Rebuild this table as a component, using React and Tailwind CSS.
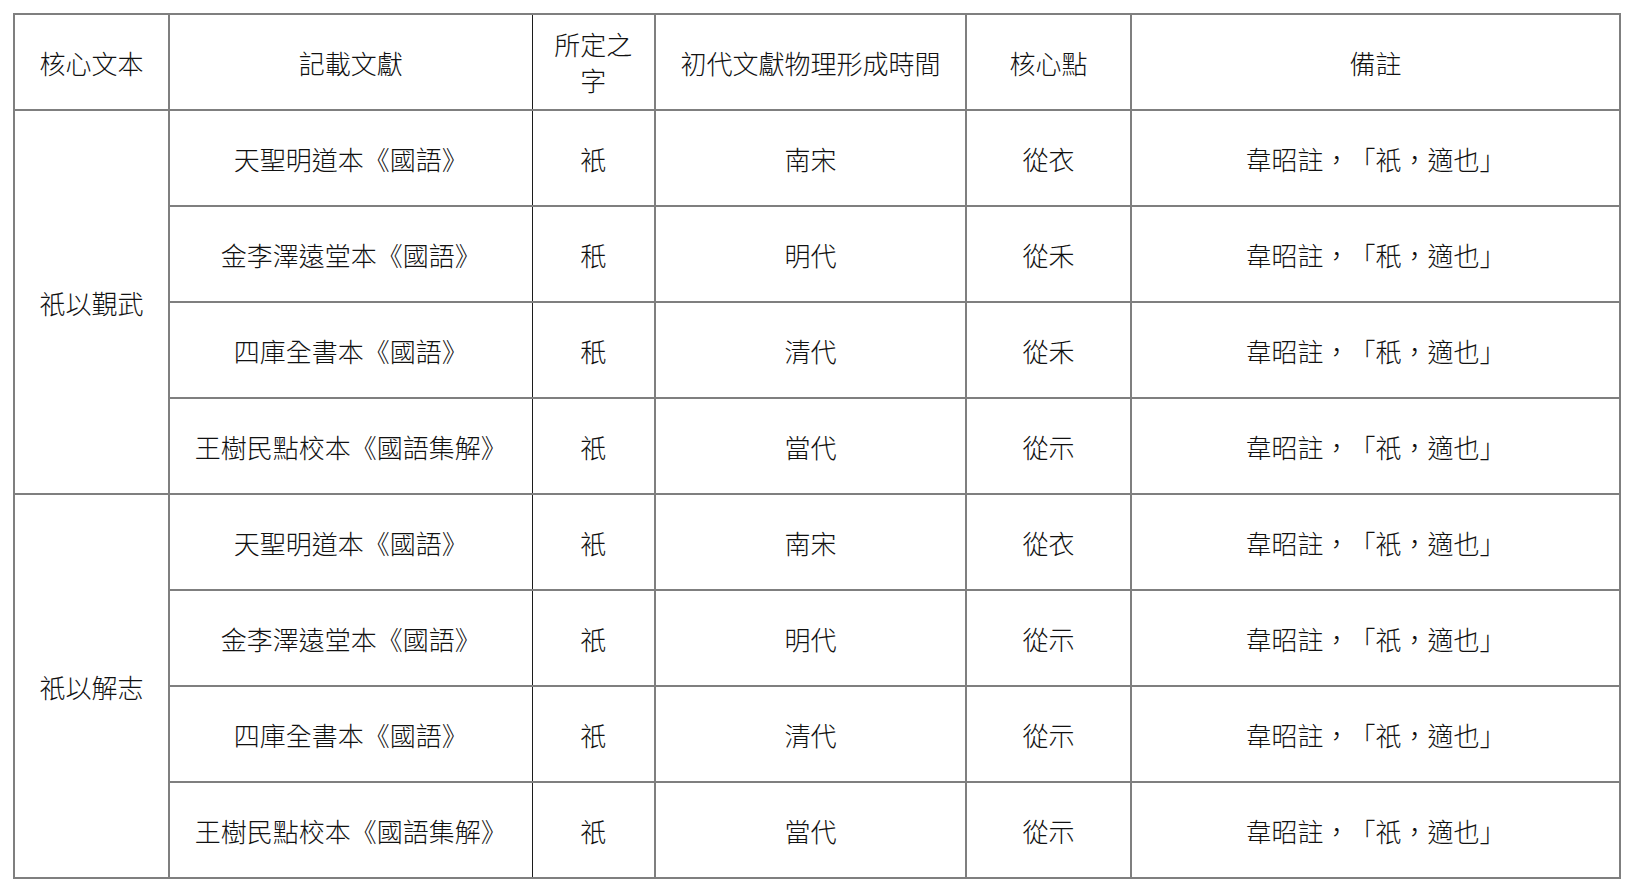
const groups = [
  {
    title: '祇以覲武',
    rows: [
      ['天聖明道本《國語》', '衹', '南宋', '從衣', '韋昭註，「衹，適也」'],
      ['金李澤遠堂本《國語》', '秖', '明代', '從禾', '韋昭註，「秖，適也」'],
      ['四庫全書本《國語》', '秖', '清代', '從禾', '韋昭註，「秖，適也」'],
      ['王樹民點校本《國語集解》', '祇', '當代', '從示', '韋昭註，「祇，適也」'],
    ],
  },
  {
    title: '祇以解志',
    rows: [
      ['天聖明道本《國語》', '衹', '南宋', '從衣', '韋昭註，「衹，適也」'],
      ['金李澤遠堂本《國語》', '祇', '明代', '從示', '韋昭註，「祇，適也」'],
      ['四庫全書本《國語》', '祇', '清代', '從示', '韋昭註，「祇，適也」'],
      ['王樹民點校本《國語集解》', '祇', '當代', '從示', '韋昭註，「祇，適也」'],
    ],
  },
]

const cell = 'border-2 border-[#7f7f7f] text-center align-middle p-0'
// the line between 記載文獻 and 所定之字 is a thin dark one
const docCell = 'border-y-2 border-l-2 border-r border-[#7f7f7f] border-r-[#1c1c1c] text-center align-middle p-0'
const charCell = 'border-y-2 border-r-2 border-l border-[#7f7f7f] border-l-[#1c1c1c] text-center align-middle p-0'

export default function App() {
  return (
    <div className="min-h-screen bg-white pt-[13px] pl-[13px] font-['Noto_Sans_CJK_TC','Noto_Sans_CJK_SC',sans-serif] text-[26px] font-light text-[#111] [text-spacing-trim:space-all]">
      <table className="table-fixed border-collapse">
        <colgroup>
          <col className="w-[155px]" />
          <col className="w-[363px]" />
          <col className="w-[123px]" />
          <col className="w-[311px]" />
          <col className="w-[165px]" />
          <col className="w-[489px]" />
        </colgroup>
        <thead>
          <tr className="h-[96px]">
            <th className={`${cell} font-light`}>核心文本</th>
            <th className={`${docCell} font-light`}>記載文獻</th>
            <th className={`${charCell} font-light leading-[36px]`}>
              所定之
              <br />
              字
            </th>
            <th className={`${cell} font-light`}>初代文獻物理形成時間</th>
            <th className={`${cell} font-light`}>核心點</th>
            <th className={`${cell} font-light`}>備註</th>
          </tr>
        </thead>
        <tbody>
          {groups.map((g) =>
            g.rows.map((r, i) => (
              <tr key={g.title + i} className="h-[96px]">
                {i === 0 && (
                  <td rowSpan={g.rows.length} className={cell}>
                    {g.title}
                  </td>
                )}
                <td className={docCell}>{r[0]}</td>
                <td className={charCell}>{r[1]}</td>
                <td className={cell}>{r[2]}</td>
                <td className={cell}>{r[3]}</td>
                <td className={cell}>{r[4]}</td>
              </tr>
            ))
          )}
        </tbody>
      </table>
    </div>
  )
}
